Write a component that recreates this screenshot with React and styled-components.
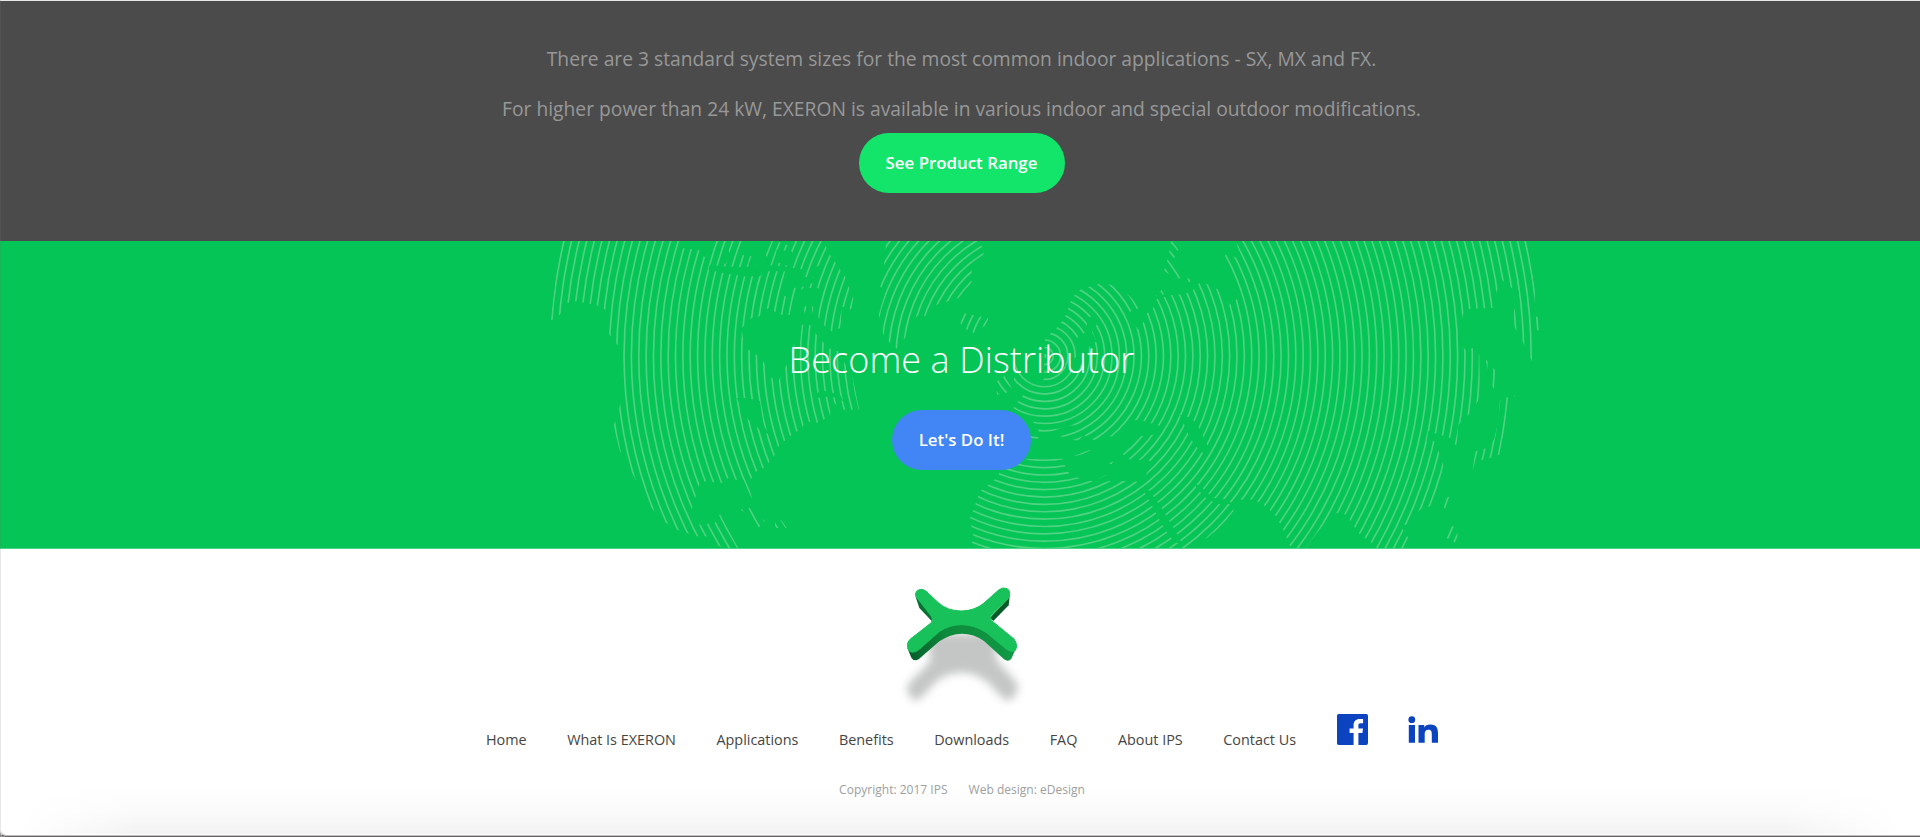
import React from "react";
import styled, { createGlobalStyle } from "styled-components";

const GlobalStyle = createGlobalStyle`
  * { box-sizing: border-box; }
  html, body { margin: 0; padding: 0; background: #fff; }
  body { font-family: "Open Sans", "Noto Sans", sans-serif; overflow: hidden; }
`;

const Page = styled.div`
  position: relative;
  display: flex;
  flex-direction: column;
  width: 100%;
  height: 837px;
  overflow: hidden;
`;

const Intro = styled.section`
  display: flex;
  flex-direction: column;
  align-items: center;
  height: 241px;
  flex: none;
  padding: 33px 0 0 3px;
  border-top: 1px solid #e6e8e7;
  background: #4b4b4b;
`;

const Lead = styled.p`
  margin: 0 0 ${(p) => p.$gap}px;
  font-size: 19.26px;
  line-height: 50px;
  height: 50px;
  color: #989898;
  white-space: nowrap;
`;

const PillButton = styled.a`
  display: flex;
  align-items: center;
  justify-content: center;
  width: ${(p) => p.$width}px;
  height: ${(p) => p.$height}px;
  border-radius: 30px;
  background: ${(p) => p.$color};
  color: #fff;
  font-size: 16.85px;
  font-weight: 600;
  line-height: 24px;
  white-space: nowrap;
`;

const Banner = styled.section`
  position: relative;
  display: flex;
  flex-direction: column;
  align-items: center;
  height: 308px;
  flex: none;
  padding: 91px 0 0 3px;
  background: #04c555;
  border-bottom: 1px solid #4fd487;
`;

const MapArt = styled.svg`
  position: absolute;
  top: 0;
  left: 530px;
  width: 1020px;
  height: 307px;
`;

const Title = styled.h2`
  position: relative;
  margin: 0 0 22px;
  font-size: 36px;
  font-weight: 300;
  line-height: 56px;
  letter-spacing: 0.08px;
  color: #fff;
  white-space: nowrap;
`;

const BannerAction = styled.div`
  position: relative;
`;

const Footer = styled.footer`
  display: flex;
  flex-direction: column;
  align-items: center;
  flex: 1;
  padding-left: 4px;
  background: #fff;
`;

const Logo = styled.svg`
  display: block;
  width: 160px;
  height: 150px;
  margin: 21px 4px 0 0;
  flex: none;
`;

const Nav = styled.nav`
  display: flex;
  align-items: flex-start;
  gap: 40.5px;
  height: 46px;
  margin-top: -6px;
`;

const NavLink = styled.a`
  padding-top: 16px;
  font-size: 14.4px;
  line-height: 20px;
  color: #454545;
  white-space: nowrap;
`;

const Social = styled.svg`
  display: block;
  width: ${(p) => p.$w}px;
  height: 31px;
`;

const Legal = styled.div`
  display: flex;
  gap: 21px;
  margin-top: 20px;
  font-size: 12.04px;
  line-height: 20px;
  color: #a0a0a0;
  white-space: nowrap;
`;

const BottomShade = styled.div`
  position: absolute;
  left: 0;
  right: 0;
  bottom: 3px;
  height: 48px;
  background: linear-gradient(rgba(0, 0, 0, 0), rgba(0, 0, 0, 0.015) 50%, rgba(0, 0, 0, 0.05));
  mask-image: linear-gradient(90deg, transparent 20px, #000 140px, #000 1780px, transparent 1900px);
`;

const WindowEdge = styled.div`
  position: absolute;
  inset: 0;
  border-bottom: 1px solid #686666;
  border-left: 1px solid rgba(120, 120, 120, 0.18);
  border-bottom-left-radius: 6px;
  box-shadow: inset 0 -1px 0 #bcbcbc, 0 0 0 6px #8c8c8c;
`;

const RINGS = Array.from({ length: 76 }, (_, i) => 4 + i * 22.06);

const LAND = [
  "M92 0L62 258L90 240L110 205L140 200L200 212L225 225L238 300L262 330L275 350L282 450L268 520L250 575L270 650L320 740L360 815L400 860L440 885L500 905L530 905L560 930L600 950L630 950L595 885L570 838L555 865L505 870L485 825L497 785L508 750L530 738L572 747L595 730L617 735L640 735L668 800L655 745L680 710L700 700L730 670L745 635L780 605L815 580L828 560L860 565L900 545L905 500L940 525L988 525L968 430L925 350L895 340L860 300L840 270L815 270L810 320L790 330L795 380L770 390L745 440L725 430L700 380L680 360L655 345L640 320L635 280L665 250L690 245L715 220L750 240L780 240L790 190L820 160L865 160L865 250L885 275L905 290L932 280L935 215L965 225L970 190L945 125L900 60L885 30L870 15L830 0L780 0L785 35L740 20L725 0L555 0L545 60L525 68L505 45L455 40L445 0Z",
  "M1070 0L1065 60L1060 110L1050 155L1065 175L1046 240L1060 300L1080 325L1100 342L1125 310L1140 270L1165 240L1185 245L1220 210L1255 200L1285 190L1325 155L1325 105L1350 75L1365 50L1335 0Z",
  "M1300 235L1375 250L1370 270L1330 295L1310 285L1290 265Z",
  "M1400 440L1425 423L1445 460L1425 478L1400 480Z",
  "M630 825L660 820L705 860L685 880L660 840ZM735 850L755 858L770 880L735 880Z",
  "M1455 385L1495 435L1540 450L1545 310L1575 285L1600 255L1610 235L1625 190L1650 165L1705 148L1745 150L1795 180L1830 215L1845 240L1870 220L1875 195L1920 182L1965 178L1990 165L2010 143L2040 150L2065 165L2085 190L2100 210L2125 190L2105 140L2075 80L2090 55L2140 80L2120 30L2130 0L2990 0L3015 165L3008 385L2980 325L2952 275L2952 225L2970 215L2965 165L2945 160L2915 135L2900 170L2890 220L2820 222L2800 235L2785 300L2805 345L2830 340L2848 360L2850 490L2820 535L2785 570L2780 635L2760 610L2695 590L2690 620L2715 620L2740 690L2725 780L2700 815L2670 825L2630 870L2610 870L2635 910L2615 950L2550 950L2525 925L2485 895L2450 840L2420 835L2390 860L2360 895L2320 950L2280 935L2260 885L2235 840L2200 810L2170 795L2110 795L2110 830L2070 880L2030 910L2000 920L1965 950L1320 950L1330 905L1320 850L1330 825L1350 770L1390 740L1420 700L1500 650L1540 640L1520 570L1450 520L1480 480L1450 455Z",
  "M1925 15L1945 45L1930 75L1952 132L1940 130L1902 110L1915 65Z",
  "M1970 130L1995 140L1975 142ZM1875 185L1895 165L1905 178Z",
  "M2865 370L2880 390L2895 405L2895 470L2885 450ZM2910 495L2955 480L2930 530L2925 580L2908 660L2880 670L2840 680L2828 708L2835 650L2870 640L2892 615L2905 560Z",
  "M2740 790L2768 785L2752 825L2742 820ZM2755 875L2780 875L2785 930L2750 910ZM3015 245L3033 250L3033 290L3018 285Z",
];

const SEA = [
  "M540 90L580 95L640 98L690 90L760 95L820 105L815 125L850 130L840 110L870 90L860 140L825 155L790 160L780 190L755 180L765 110L700 110L690 125L640 125L580 115L535 105Z",
  "M660 0L735 0L705 60L720 75L700 95L655 90L665 65L630 60Z",
  "M740 45L785 50L790 75L775 95L735 80Z",
  "M575 60L590 30L600 60L585 90Z",
  "M620 490L650 490L690 500L700 570L715 595L700 600L680 575L655 555L640 530Z",
  "M860 490L905 485L940 500L930 480L870 465L860 480Z",
  "M1500 600L1560 592L1610 575L1645 570L1690 615L1770 600L1790 560L1830 555L1900 578L1870 600L1830 605L1775 650L1800 672L1850 675L1875 685L1850 715L1840 742L1770 738L1695 742L1640 728L1610 710L1600 672L1500 672L1400 690L1400 590Z",
  "M1950 540L1985 550L2010 585L2035 640L2035 662L2010 650L1980 610Z",
  "M1840 765L1855 765L1895 820L1945 905L1955 925L1935 925L1905 885L1875 830Z",
  "M1990 745L2010 755L2050 790L2095 795L2105 808L2060 808L2020 785Z",
  "M1700 270L1690 245L1670 250L1672 290L1640 310L1640 365L1605 395L1625 405L1665 380L1680 330L1700 320L1685 290Z",
  "M1790 235L1830 220L1845 255L1825 285L1805 260Z",
  "M2090 160L2110 160L2125 190L2100 205Z",
];

const ISLETS = [
  "M1590 605L1660 580L1700 620L1660 600L1645 620ZM1630 665L1680 645L1690 655ZM1700 735L1730 720L1735 725L1710 735ZM1730 655L1755 635L1765 640ZM1500 605L1525 605L1525 612L1500 612ZM1735 685L1750 680L1745 690Z",
  "M1775 655L1815 615L1895 600L1875 640L1850 675L1800 675Z",
  "M820 215L830 215L825 240ZM845 215L850 215L848 240Z",
];

function WorldMap() {
  return (
    <MapArt viewBox="0 19 3060 921" preserveAspectRatio="none">
      <mask id="land" maskUnits="userSpaceOnUse" x="0" y="0" width="3060" height="960">
        {LAND.map((d) => <path key={d} d={d} fill="#fff" />)}
        {SEA.map((d) => <path key={d} d={d} fill="#000" />)}
        {ISLETS.map((d) => <path key={d} d={d} fill="#fff" />)}
      </mask>
      <g mask="url(#land)" fill="none" stroke="#4fd282" strokeWidth="5">
        {RINGS.map((r) => <circle key={r} cx="1543.5" cy="364" r={r} />)}
      </g>
    </MapArt>
  );
}

function ExeronLogo() {
  return (
    <Logo viewBox="0 0 480 450">
      <defs>
        <filter id="soft" x="-20%" y="-20%" width="140%" height="150%">
          <feGaussianBlur stdDeviation="12" />
        </filter>
        <linearGradient id="under" x1="0" x2="1">
          <stop offset="0.05" stopColor="#07602b" />
          <stop offset="0.35" stopColor="#0d8a3c" />
          <stop offset="1" stopColor="#119a45" />
        </linearGradient>
      </defs>
      <path filter="url(#soft)" fill="#c4c6c6" d="M145 190L345 190L350 270L412 340Q418 372 390 392Q370 392 345 360Q300 306 240 308Q185 310 150 355Q120 392 105 392Q78 378 82 345L150 275Z" />
      <path fill="#087033" d="M106 78L118 114L155 153L162 142Z" />
      <path fill="#065c29" d="M389 80L386 106L340 153L330 143Z" />
      <path fill="url(#under)" d="M82 234L94 263Q102 276 116 268L178 214Q210 192 246 191Q282 191 312 213L372 268Q385 277 394 266L411 228L370 220L280 160L200 160L120 225Z" />
      <path fill="#18c15a" stroke="#18c15a" strokeWidth="3" strokeLinejoin="round" d="M107 78Q104 60 124 58Q136 59 145 70L175 98Q202 123 245 123Q285 122 312 99L356 60Q368 50 382 56Q392 63 388 82L333 137Q329 145 335 152L402 207Q415 225 406 241Q396 249 379 237L318 187Q282 164 245 164Q208 164 178 185L118 238Q100 252 88 243Q75 224 90 208L154 158Q160 148 154 139Z" />
    </Logo>
  );
}

const LINKS = ["Home", "What Is EXERON", "Applications", "Benefits", "Downloads", "FAQ", "About IPS", "Contact Us"];

export default function App() {
  return (
    <Page>
      <GlobalStyle />
      <Intro>
        <Lead $gap={0}>There are 3 standard system sizes for the most common indoor applications - SX, MX and FX.</Lead>
        <Lead $gap={-1}>For higher power than 24 kW, EXERON is available in various indoor and special outdoor modifications.</Lead>
        <PillButton $width={206} $height={60} $color="#12e56a">See Product Range</PillButton>
      </Intro>
      <Banner>
        <WorldMap />
        <Title>Become a Distributor</Title>
        <BannerAction>
          <PillButton $width={139} $height={60} $color="#4285f4">Let's Do It!</PillButton>
        </BannerAction>
      </Banner>
      <Footer>
        <ExeronLogo />
        <Nav>
          {LINKS.map((label) => <NavLink key={label}>{label}</NavLink>)}
          <Social $w={31} viewBox="0 0 31 31">
            <path fill="#0c44c0" d="M1.7 0H29.3Q31 0 31 1.7V29.3Q31 31 29.3 31H21.4V19H25.4L26 14.4H21.4V11.5C21.4 10.1 21.8 9.2 23.7 9.2H26.1V5.1C25.7 5 24.3 4.9 22.6 4.9C19 4.9 16.6 7 16.6 11V14.4H12.6V19H16.6V31H1.7Q0 31 0 29.3V1.7Q0 0 1.7 0Z" />
          </Social>
          <Social $w={30} viewBox="0 0 30 31">
            <g fill="#0c44c0">
              <circle cx="3.8" cy="5.7" r="3.4" />
              <path d="M.8 11.1H7V28.8H.8ZM10.5 11.1H16.3V13.5C17.2 11.9 19.2 10.6 22 10.6C28.2 10.6 30 14 30 19.1V28.8H23.8V20.2C23.8 17.7 23.3 15.8 20.4 15.8C17.7 15.8 16.7 17.6 16.7 20.1V28.8H10.5Z" />
            </g>
          </Social>
        </Nav>
        <Legal>
          <span>Copyright: 2017 IPS</span>
          <span>Web design: eDesign</span>
        </Legal>
      </Footer>
      <BottomShade />
      <WindowEdge />
    </Page>
  );
}
